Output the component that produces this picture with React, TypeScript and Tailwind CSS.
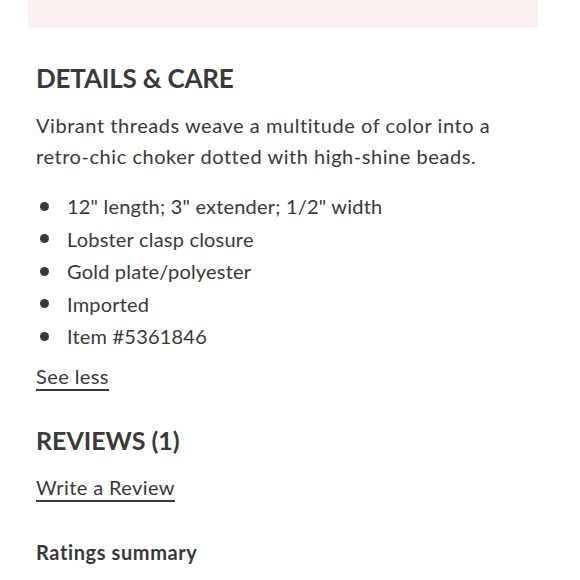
import React from "react";

export default function App() {
  const items = [
    '12" length; 3" extender; 1/2" width',
    "Lobster clasp closure",
    "Gold plate/polyester",
    "Imported",
    "Item #5361846",
  ];
  return (
    <div className="w-[580px] h-[580px] overflow-hidden bg-white text-[#393939]" style={{ fontFamily: "Lato, 'Noto Sans', sans-serif" }}>
      <div className="ml-[28px] w-[510px] h-[28px] bg-[#fcf1f1]" />
      <div className="pl-[36px] pr-[60px]">
        <h2 className="mt-[32px] text-[26px] leading-[36px] font-bold tracking-[-0.2px]">DETAILS &amp; CARE</h2>
        <p className="mt-[14px] text-[20px] leading-[31px] tracking-[0.55px]">
          Vibrant threads weave a multitude of color into a retro-chic choker dotted with high-shine beads.
        </p>
        <ul className="mt-[18px] flex flex-col">
          {items.map((t) => (
            <li key={t} className="flex items-center text-[20px] leading-[32.5px] tracking-[0.2px]">
              <span className="ml-[4px] w-[9px] h-[9px] rounded-full bg-[#393939]" />
              <span className="ml-[18px]">{t}</span>
            </li>
          ))}
        </ul>
        <a className="inline-block mt-[10px] text-[20px] leading-[26px] tracking-[0.4px] border-b-2 border-[#393939]">See less</a>
        <h2 className="mt-[31px] text-[25px] leading-[36px] font-bold">REVIEWS (1)</h2>
        <a className="inline-block mt-[16px] text-[20px] leading-[26px] tracking-[0.4px] border-b-2 border-[#393939]">Write a Review</a>
        <h3 className="mt-[36px] text-[20px] leading-[28px] font-bold tracking-[0.6px]">Ratings summary</h3>
      </div>
    </div>
  );
}
